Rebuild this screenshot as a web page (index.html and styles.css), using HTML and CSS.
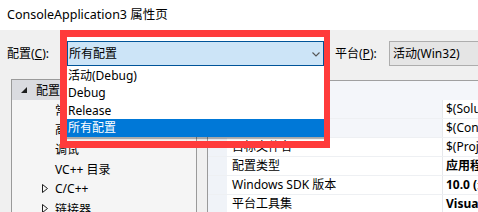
FILE: index.html
```html
<!DOCTYPE html>
<html lang="zh-CN">
<head>
<meta charset="utf-8">
<title>ConsoleApplication3 属性页</title>
<link rel="stylesheet" href="styles.css">
</head>
<body>
<div class="window">
  <div class="titlebar">ConsoleApplication3 属性页</div>
  <div class="main">
    <div class="toolbar">
      <span class="label cfg-label">配置(<u>C</u>):</span>
      <div class="combo-wrap">
        <div class="combo active">
          <span class="combo-text">所有配置</span>
          <svg class="chev" width="8" height="5" viewBox="0 0 8 5"><polyline points="0.5,0.5 4,4 7.5,0.5"/></svg>
        </div>
        <ul class="dropdown">
          <li>活动(Debug)</li>
          <li>Debug</li>
          <li>Release</li>
          <li class="sel">所有配置</li>
        </ul>
      </div>
      <span class="label plat-label">平台(<u>P</u>):</span>
      <div class="combo plat"><span class="combo-text">活动(Win32)</span></div>
    </div>
    <div class="content">
      <div class="tree">
        <div class="node root sel-node">
          <svg class="exp-open" width="6" height="6" viewBox="0 0 6 6"><polygon points="6,0 6,6 0,6"/></svg>
          <span>配置</span>
        </div>
        <div class="node child">常规</div>
        <div class="node child">高级</div>
        <div class="node child">调试</div>
        <div class="node child">VC++ 目录</div>
        <div class="node child">
          <svg class="exp-closed" width="6" height="9" viewBox="0 0 6 9"><polygon points="0.5,0.5 5.5,4.5 0.5,8.5"/></svg>
          <span>C/C++</span>
        </div>
        <div class="node child">
          <svg class="exp-closed" width="6" height="9" viewBox="0 0 6 9"><polygon points="0.5,0.5 5.5,4.5 0.5,8.5"/></svg>
          <span>链接器</span>
        </div>
      </div>
      <div class="grid">
        <div class="cat"><span class="gut"></span><span class="cat-name">常规</span></div>
        <div class="row shade"><span class="gut"></span><span class="name">输出目录</span><span class="val">$(SolutionDir)$(Configuration)\</span></div>
        <div class="row shade"><span class="gut"></span><span class="name">中间目录</span><span class="val">$(Configuration)\</span></div>
        <div class="row"><span class="gut"></span><span class="name">目标文件名</span><span class="val">$(ProjectName)</span></div>
        <div class="row"><span class="gut"></span><span class="name">配置类型</span><span class="val bold">应用程序(.exe)</span></div>
        <div class="row"><span class="gut"></span><span class="name">Windows SDK 版本</span><span class="val bold">10.0 (最新安装的版本)</span></div>
        <div class="row"><span class="gut"></span><span class="name">平台工具集</span><span class="val bold">Visual Studio 2019 (v142)</span></div>
      </div>
    </div>
  </div>
  <div class="annot"></div>
</div>
</body>
</html>
```

FILE: styles.css
```css
* { box-sizing: border-box; }
html, body {
  margin: 0;
  padding: 0;
}
body {
  width: 478px;
  height: 212px;
  overflow: hidden;
  font-family: "Noto Sans", "Noto Sans CJK SC", sans-serif;
  font-size: 12px;
  color: #000;
  background: #f0f0f0;
}
.window {
  position: relative;
  width: 478px;
  height: 212px;
  overflow: hidden;
}
.titlebar {
  height: 30px;
  background: #fff;
  padding-left: 7px;
  line-height: 30px;
  font-size: 12.5px;
  white-space: nowrap;
}
.main {
  height: 182px;
  background: #f0f0f0;
}
.toolbar {
  display: flex;
  align-items: flex-start;
  height: 49px;
  padding-top: 11px;
  padding-left: 7px;
  white-space: nowrap;
}
.toolbar > * { flex: none; }
.label {
  line-height: 25px;
  height: 25px;
}
.label u { text-decoration: underline; text-underline-offset: 1px; }
.cfg-label { width: 60px; }
.combo-wrap {
  position: relative;
  width: 257px;
  height: 25px;
}
.combo {
  display: flex;
  align-items: center;
  height: 25px;
  line-height: 23px;
  padding-left: 1px;
}
.combo.active {
  width: 257px;
  background: #cce4f7;
  border: 1px solid #005499;
  box-shadow: 0 -4px 0 #fff;
}
.combo-text { flex: 1; }
.chev {
  fill: none;
  stroke: #555;
  stroke-width: 1.1;
  margin-right: 3px;
  margin-top: 1px;
}
.dropdown {
  position: absolute;
  left: 0;
  top: 25px;
  width: 257px;
  margin: 0;
  padding: 1px 0 0;
  list-style: none;
  background: #fff;
  box-shadow: 0 2px 1px rgba(0,0,0,0.3);
  z-index: 2;
}
.dropdown li {
  height: 17.4px;
  line-height: 17.4px;
  padding-left: 1px;
}
.dropdown li.sel {
  background: #0078d7;
  color: #fff;
}
.plat-label {
  margin-left: 11px;
  width: 54px;
}
.combo.plat {
  width: 140px;
  background: #e5e5e5;
  border: 1px solid #adadad;
  padding-left: 3px;
}
.content {
  display: flex;
  align-items: flex-start;
  height: 133px;
}
.tree {
  flex: none;
  margin-left: 11px;
  width: 186px;
  height: 140px;
  background: #f5f5f5;
  border: 1px solid #9a9a9a;
}
.node {
  display: flex;
  align-items: center;
  height: 19.8px;
  white-space: nowrap;
}
.node.root { padding-left: 9px; }
.node.sel-node { background: #dadbe0; }
.exp-open { fill: #1e1e1e; margin-right: 9px; margin-top: 1px; }
.node.child { padding-left: 43px; }
.node.child .exp-closed {
  margin-left: -13px;
  margin-right: 7px;
  fill: none;
  stroke: #1e1e1e;
  stroke-width: 1;
}
.grid {
  flex: 1;
  margin-left: 10px;
  margin-top: 1px;
  height: 140px;
  background: #fff;
  border-left: 1px solid #9a9a9a;
  border-top: 1px solid #a0a0a0;
  overflow: hidden;
}
.cat {
  display: flex;
  height: 19px;
  line-height: 19px;
  background: #f4f6fa;
  white-space: nowrap;
}
.gut {
  flex: none;
  width: 19px;
  background: #f0f3f8;
}
.cat-name { padding-left: 4px; font-weight: bold; }
.row {
  display: flex;
  height: 19px;
  line-height: 18px;
  border-bottom: 1px solid #eef0f3;
  white-space: nowrap;
}
.name {
  flex: none;
  width: 215px;
  padding-left: 5px;
}
.row.shade .name { background: #f4f6fa; }
.val {
  flex: none;
  width: 200px;
  padding-left: 3px;
  border-left: 1px solid #e6e8ec;
  overflow: hidden;
}
.val.bold { font-weight: bold; }
.annot {
  position: absolute;
  left: 60px;
  top: 30px;
  width: 270px;
  height: 118px;
  border-style: solid;
  border-color: #ff3b3b;
  border-width: 7px 6px 7px 7px;
  z-index: 5;
  pointer-events: none;
}
```
